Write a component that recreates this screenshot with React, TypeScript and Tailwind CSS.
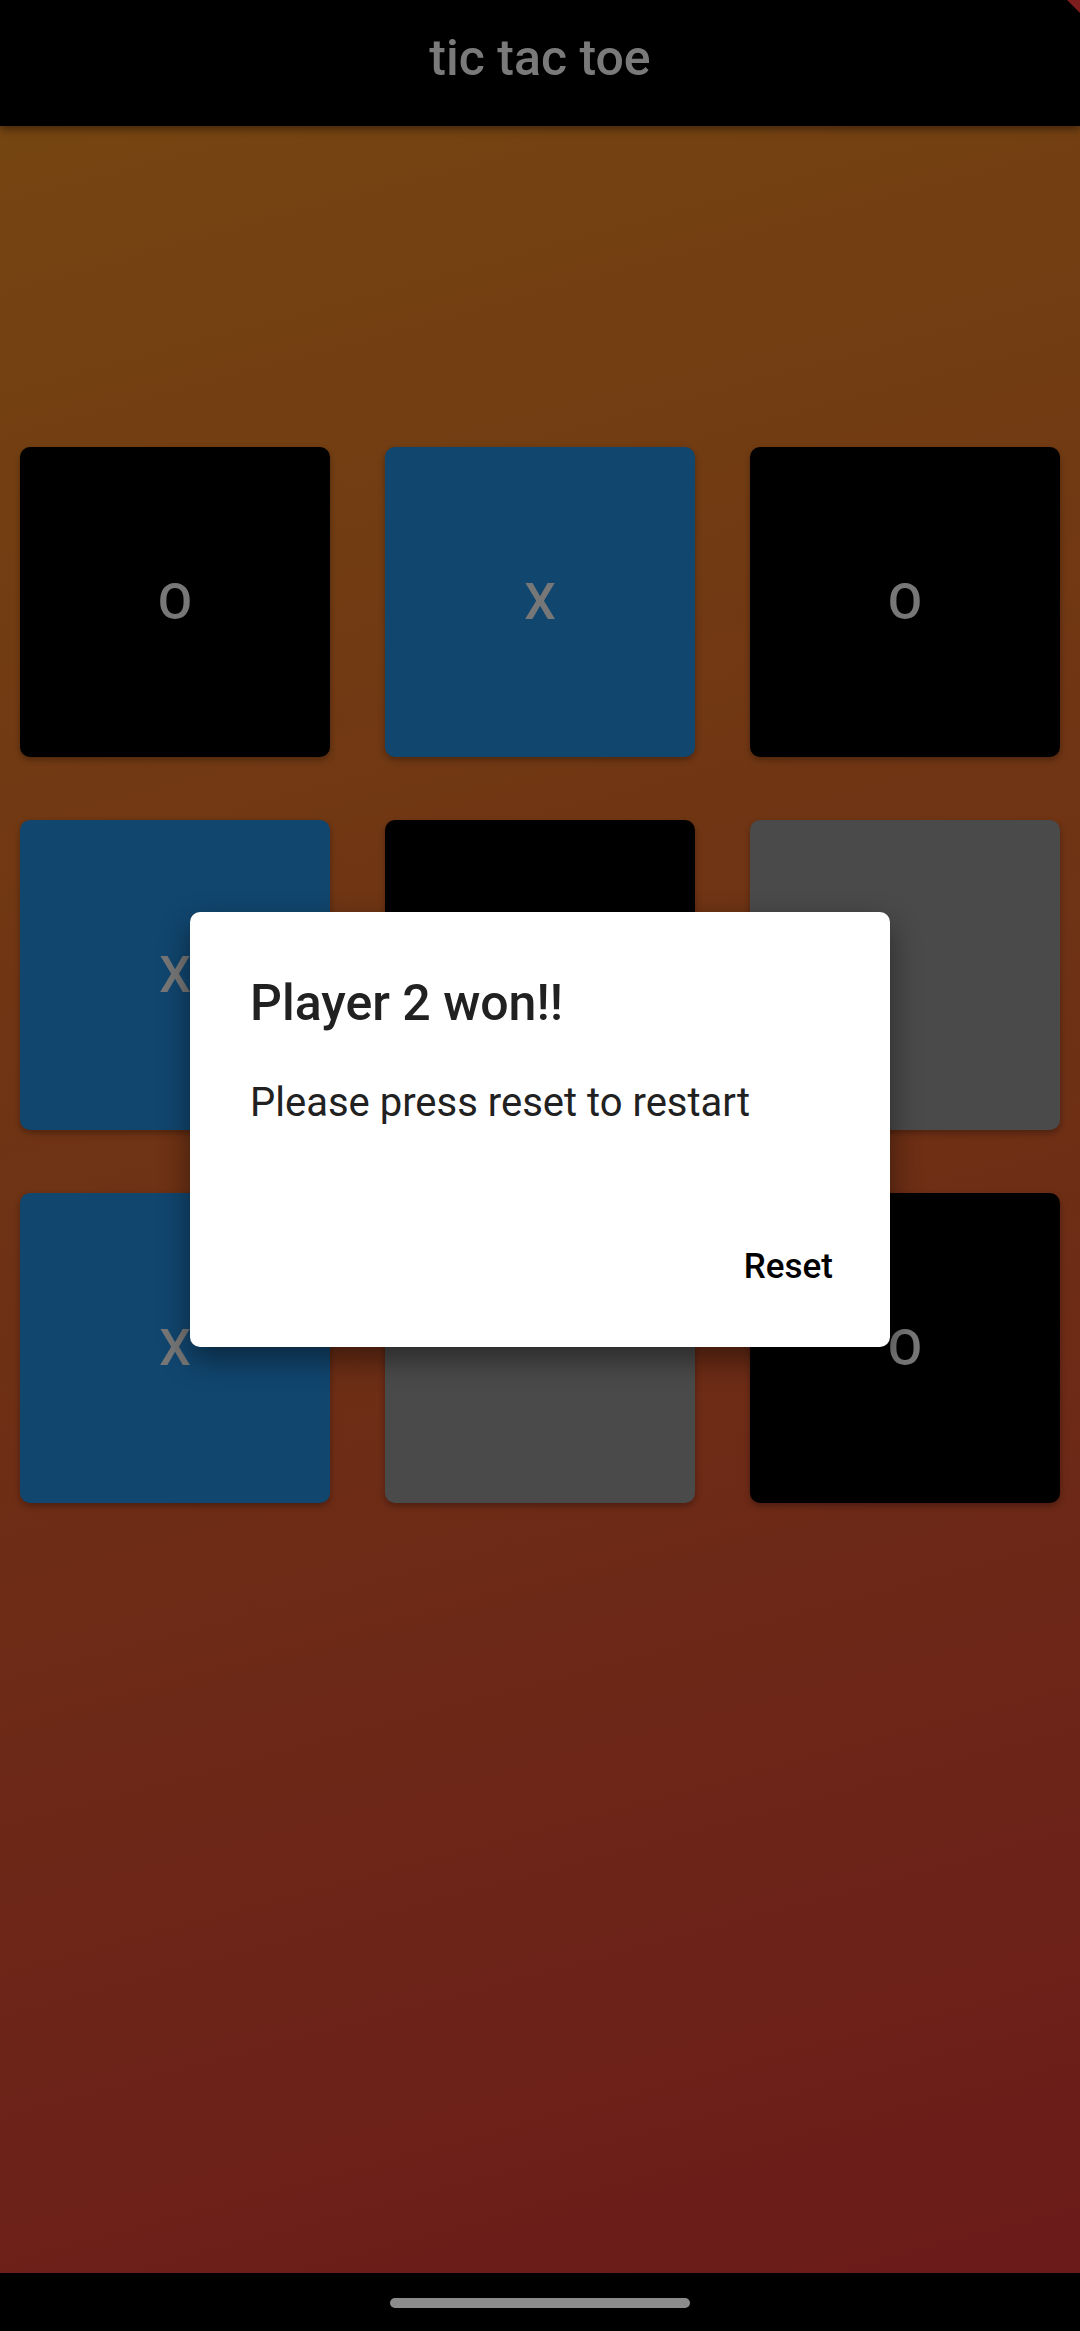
import React from "react";

type Cell = { mark: string; color: "black" | "blue" | "gray" };

const board: Cell[] = [
  { mark: "O", color: "black" },
  { mark: "X", color: "blue" },
  { mark: "O", color: "black" },
  { mark: "X", color: "blue" },
  { mark: "", color: "black" },
  { mark: "", color: "gray" },
  { mark: "X", color: "blue" },
  { mark: "", color: "gray" },
  { mark: "O", color: "black" },
];

const tileColors = {
  black: "bg-black",
  blue: "bg-[#11466f]",
  gray: "bg-[#4a4a4a]",
};

export default function App() {
  return (
    <div
      className="relative flex flex-col w-[1080px] h-[2331px] overflow-hidden"
      style={{ fontFamily: "Roboto, 'Noto Sans', sans-serif" }}
    >
      {/* app bar */}
      <div className="relative z-10 h-[126px] bg-black flex justify-center pt-[28px] shadow-[0_3px_8px_rgba(0,0,0,0.45)]">
        <span className="text-[50px] leading-[60px] font-medium text-[#7a7a7a]">
          tic tac toe
        </span>
      </div>

      {/* debug banner corner */}
      <svg className="absolute top-0 right-0 z-20" width="14" height="14" viewBox="0 0 14 14">
        <polygon points="1,0 14,0 14,13" fill="#7e1d1d" />
      </svg>

      {/* board */}
      <div className="flex-1 bg-linear-[165deg] from-[#754511] via-[#6e3015] to-[#6b1b1a] pt-[321px] px-[20px]">
        <div className="grid grid-cols-3 gap-x-[55px] gap-y-[63px]">
          {board.map((cell, i) => (
            <div
              key={i}
              className={`h-[310px] rounded-[10px] flex items-center justify-center shadow-[0_3px_6px_rgba(0,0,0,0.3)] ${tileColors[cell.color]}`}
            >
              <span className="text-[50px] leading-[60px] font-medium text-[#777777]">
                {cell.mark}
              </span>
            </div>
          ))}
        </div>
      </div>

      {/* nav bar */}
      <div className="h-[58px] bg-black flex justify-center pt-[25px]">
        <div className="w-[300px] h-[10px] rounded-full bg-[#8c8c8c]" />
      </div>

      {/* dialog */}
      <div className="absolute inset-0 z-30 flex justify-center pt-[912px]">
        <div className="w-[700px] h-[435px] bg-white rounded-[10px] shadow-[0_12px_30px_rgba(0,0,0,0.45)] flex flex-col pl-[60px] pr-[57px] pt-[61px]">
          <div className="text-[50px] leading-[60px] font-medium text-[#212121]">
            Player 2 won!!
          </div>
          <div className="mt-[42px] text-[40px] leading-[56px] text-[#212121]">
            Please press reset to restart
          </div>
          <div className="mt-[116px] flex justify-end">
            <span className="text-[35px] leading-[40px] font-medium text-black">
              Reset
            </span>
          </div>
        </div>
      </div>
    </div>
  );
}
